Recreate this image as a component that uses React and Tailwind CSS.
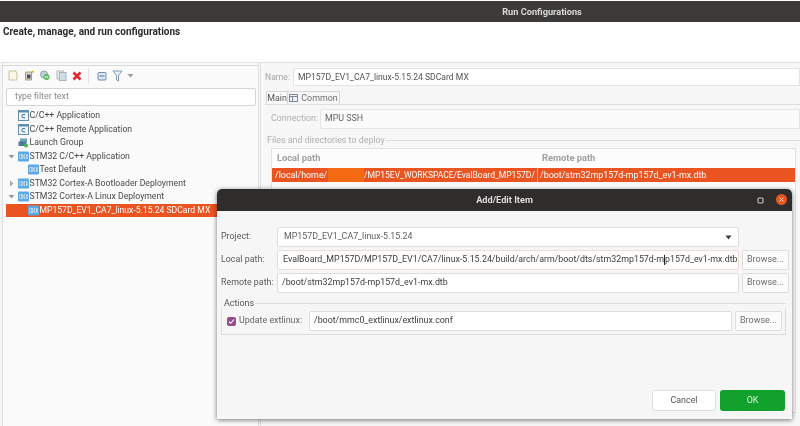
const font = { fontFamily: 'Roboto, "Noto Sans", sans-serif' };

function IdeIcon() {
  return (
    <svg width="11" height="11" viewBox="0 0 11 11" className="shrink-0">
      <rect x="0" y="0.5" width="11" height="10" rx="1" fill="#58a9e6" />
      <rect x="1.5" y="3" width="8" height="5" fill="#d8ecfa" />
      <path d="M2.5 3.5v4M4 3.5v4M5 3.5h1v4H5M7.5 3.5v4h1M7.5 5.5h1M7.5 3.5h1" stroke="#3d8fd0" strokeWidth="0.7" fill="none" />
    </svg>
  );
}

function CIcon() {
  return (
    <svg width="11" height="11" viewBox="0 0 11 11" className="shrink-0">
      <rect x="0.5" y="0.5" width="10" height="10" fill="#eef4f8" stroke="#6d8ea8" />
      <rect x="0.5" y="0.5" width="10" height="2" fill="#5b8fb8" />
      <path d="M7 4.6H5a1 1 0 0 0-1 1v1.2a1 1 0 0 0 1 1h2" stroke="#3c6f96" strokeWidth="1" fill="none" />
    </svg>
  );
}

function GroupIcon() {
  return (
    <svg width="11" height="11" viewBox="0 0 11 11" className="shrink-0">
      <rect x="2" y="1.5" width="7" height="4" fill="#6f9fbb" />
      <rect x="0.5" y="4.5" width="8" height="4.5" fill="#4d7d9c" />
      <circle cx="8" cy="8.5" r="2" fill="#4bb04f" />
    </svg>
  );
}

function Chevron({ open }) {
  return (
    <svg width="7" height="7" viewBox="0 0 7 7" className="shrink-0">
      {open ? <path d="M0.5 2h6L3.5 5.5z" fill="#9a9a9a" /> : <path d="M2 0.5v6L5.5 3.5z" fill="#a8a8a8" />}
    </svg>
  );
}

function TreeRow({ icon, label, indent, chevron, selected }) {
  return (
    <div className={`flex h-[13.5px] items-center whitespace-nowrap leading-none ${selected ? "bg-[#e95420] text-[8.6px] text-white" : "text-[8.7px] text-[#4a4a4a]"}`}>
      <div className={`flex items-center ${indent}`}>
        {chevron !== undefined ? <span className="mr-[3px] flex w-[7px]"><Chevron open={chevron} /></span> : null}
        {icon}
        <span className="ml-[0.5px]">{label}</span>
      </div>
    </div>
  );
}

function Toolbar() {
  return (
    <div className="flex h-[21px] items-center gap-[5.5px] pb-[2px] pl-[5px]">
      <svg width="10" height="11" viewBox="0 0 10 11"><path d="M1 1h6l2 2v7H1z" fill="#fbf7e6" stroke="#c9c2a0" /><path d="M7.5 0.5l1 1" stroke="#e0b020" /></svg>
      <svg width="11" height="11" viewBox="0 0 11 11"><path d="M1.5 2h6v8h-6z" fill="#d9d6c8" stroke="#a5a08a" /><rect x="3" y="4.5" width="3.5" height="4" fill="#4a4f5c" /><path d="M8 1l1.5 1.5" stroke="#d9a520" strokeWidth="1.5" /></svg>
      <svg width="12" height="11" viewBox="0 0 12 11" className="ml-[-1px]"><circle cx="5" cy="4.5" r="3.5" fill="#c4d0d8" stroke="#8da0ad" /><circle cx="7.5" cy="7" r="3" fill="#5dbb63" /><rect x="5.8" y="6.5" width="3.4" height="1" fill="#fff" /></svg>
      <svg width="11" height="11" viewBox="0 0 11 11" className="ml-[-1px]"><rect x="1" y="1" width="6.5" height="8" fill="#e6ebf0" stroke="#b3bcc6" /><rect x="3.5" y="2.5" width="6.5" height="8" fill="#d0dbe6" stroke="#a7b4c2" /></svg>
      <svg width="10" height="10" viewBox="0 0 10 10"><path d="M1.5 1.5l7 7M8.5 1.5l-7 7" stroke="#df2a2f" strokeWidth="2.6" /></svg>
      <span className="ml-[0.5px] h-[15px] w-px bg-[#e3e3e3]" />
      <svg width="10" height="10" viewBox="0 0 10 10" className="ml-[2px]"><rect x="1" y="1.5" width="8" height="7.5" rx="1" fill="#dce6f0" stroke="#6e8fb0" /><path d="M2.5 5h5" stroke="#4f7396" /></svg>
      <svg width="11" height="12" viewBox="0 0 11 12"><path d="M1 1h9L6.5 5.5V11l-2-1V5.5z" fill="#eef4f9" stroke="#7f9cb6" /></svg>
      <svg width="7" height="5" viewBox="0 0 7 5" className="ml-[-2px]"><path d="M0.5 1h6L3.5 4.5z" fill="#9d9d9d" /></svg>
    </div>
  );
}

function LeftPanel() {
  return (
    <div className="w-[257px] shrink-0 self-stretch border-x border-t border-[#e0e0e0] bg-[#fafafa]">
      <div className="mt-[2px] border-t border-[#d9d9d9]"><Toolbar /></div>
      <div className="ml-[3px] mr-[2px] mt-[1px] flex h-[18px] items-center rounded-[2px] border border-[#d5d5d5] bg-white pl-[8px] text-[8.9px] text-[#8a8a8a]">type filter text</div>
      <div className="ml-[3px] mt-[3px]">
        <TreeRow indent="pl-[12px]" icon={<CIcon />} label="C/C++ Application" />
        <TreeRow indent="pl-[12px]" icon={<CIcon />} label="C/C++ Remote Application" />
        <TreeRow indent="pl-[12px]" icon={<GroupIcon />} label="Launch Group" />
        <TreeRow indent="pl-[2px]" chevron={true} icon={<IdeIcon />} label="STM32 C/C++ Application" />
        <TreeRow indent="pl-[22px]" icon={<IdeIcon />} label="Test Default" />
        <TreeRow indent="pl-[2px]" chevron={false} icon={<IdeIcon />} label="STM32 Cortex-A Bootloader Deployment" />
        <TreeRow indent="pl-[2px]" chevron={true} icon={<IdeIcon />} label="STM32 Cortex-A Linux Deployment" />
        <TreeRow indent="pl-[22px]" selected icon={<IdeIcon />} label="MP157D_EV1_CA7_linux-5.15.24 SDCard MX" />
      </div>
    </div>
  );
}

function RightPanel() {
  return (
    <div className="min-w-0 flex-1 self-stretch border-l border-t border-[#e0e0e0] bg-[#f7f7f7] pl-[4px]">
      <div className="mt-[5px] flex h-[18px] items-center text-[8.6px]">
        <span className="w-[28px] text-[#a5a5a5]">Name:</span>
        <div className="flex h-full flex-1 items-center rounded-l-[2px] border border-[#e2e2e2] bg-white pl-[4px] text-[#555]">MP157D_EV1_CA7_linux-5.15.24 SDCard MX</div>
      </div>
      <div className="mt-[5px] flex h-[13px] items-center pl-[1px] text-[8.9px] leading-none text-[#555]">
        <div className="flex h-full w-[22px] items-center justify-center border-x border-t border-[#d6d6d6] bg-[#fbfbfb]">Main</div>
        <div className="flex h-full w-[52px] items-center justify-center gap-[3px] border-r border-t border-[#d6d6d6] text-[#707070]">
          <svg width="9" height="8" viewBox="0 0 9 8"><rect x="0.5" y="0.5" width="8" height="7" fill="#eef2f6" stroke="#7b8a9a" /><path d="M0.5 2.5h8M3.5 2.5v5" stroke="#7b8a9a" /></svg>
          Common
        </div>
      </div>
      <div className="border-t border-[#dedede] pl-[5px] pt-[4px]">
        <div className="flex h-[20px] items-center text-[8.9px]">
          <span className="w-[50px] pl-[1px] text-[#b0b0b0]">Connection:</span>
          <div className="flex h-full flex-1 items-center rounded-l-[2px] border border-[#e4e4e4] bg-[#fbfbfb] pl-[4px] text-[#666]">MPU SSH</div>
        </div>
        <div className="ml-[-3px] mt-[5px] flex items-center gap-[1px] text-[8.9px] leading-[12px] text-[#b0b0b0]">
          <span className="whitespace-nowrap">Files and directories to deploy</span>
          <span className="h-px flex-1 bg-[#e0e0e0]" />
        </div>
        <div className="ml-[1px] mr-[4px] mt-[2px] border border-[#e2e2e2] bg-[#fcfcfc]">
          <div className="flex h-[19px] items-center pb-[2px] text-[9.3px] font-bold text-[#a0a0a0]">
            <span className="w-[265px] pl-[5px]">Local path</span>
            <span className="pl-[5px]">Remote path</span>
          </div>
          <div className="flex h-[14px] items-center whitespace-nowrap bg-[#e95420] text-[8.9px] leading-none text-white">
            <div className="flex w-[265px] items-center overflow-hidden pl-[3px]">
              <span className="w-[53px] shrink-0">/local/home/</span>
              <span className="h-[14px] w-[36px] shrink-0 bg-[#f46a12]" />
              <span className="text-[8.5px]">/MP15EV_WORKSPACE/EvalBoard_MP157D/</span>
            </div>
            <span className="flex h-full items-center border-l border-[#f3a283] pl-[2px]">/boot/stm32mp157d-mp157d_ev1-mx.dtb</span>
          </div>
          <div className="h-[230px]" />
        </div>
      </div>
    </div>
  );
}

function Field({ children, className }) {
  return <div className={`flex h-[20px] min-w-0 items-center overflow-hidden whitespace-nowrap rounded-[2px] border border-[#dddddd] bg-white text-[8.85px] text-[#3c3c3c] ${className}`}>{children}</div>;
}

function Browse() {
  return <div className="flex h-[20px] w-[47px] shrink-0 items-center justify-center rounded-[2px] border border-[#dddddd] bg-[#fbfbfb] text-[9px] text-[#6e6e6e]">Browse...</div>;
}

function Label({ children }) {
  return <span className="w-[56px] shrink-0 whitespace-nowrap text-[8.9px] text-[#5a5a5a]">{children}</span>;
}

function Dialog() {
  return (
    <div className="absolute left-[217px] top-[189px] flex h-[230px] w-[575px] flex-col overflow-hidden rounded-t-[5px] bg-[#f6f6f6] shadow-[0_1px_5px_rgba(0,0,0,0.55)]" style={font}>
      <div className="relative flex h-[22px] shrink-0 items-center justify-center bg-[#2f2d2c] text-[9.2px] font-bold text-[#dcdcdc]">
        Add/Edit Item
        <svg width="7" height="7" viewBox="0 0 7 7" className="absolute right-[28px] top-[8px]"><rect x="1" y="1" width="5" height="5" rx="1" fill="none" stroke="#c4c4c4" strokeWidth="1.1" /></svg>
        <span className="absolute right-[5px] top-[5px] flex h-[11px] w-[11px] items-center justify-center rounded-full bg-[#e95420]">
          <svg width="5" height="5" viewBox="0 0 5 5"><path d="M0.7 0.7l3.6 3.6M4.3 0.7l-3.6 3.6" stroke="#fff" strokeWidth="0.9" /></svg>
        </span>
      </div>
      <div className="flex flex-1 flex-col pl-[4px] pr-[3px] pt-[16px]">
        <div className="flex items-center">
          <Label>Project:</Label>
          <Field className="w-[462px] justify-between bg-[#f8f8f8] pl-[6px] pr-[6px] text-[#5e5e5e]">
            <span>MP157D_EV1_CA7_linux-5.15.24</span>
            <svg width="7" height="5" viewBox="0 0 7 5"><path d="M0.5 0.5h6L3.5 4.5z" fill="#3c3c3c" /></svg>
          </Field>
        </div>
        <div className="mt-[3px] flex items-center">
          <Label>Local path:</Label>
          <Field className="w-[462px] border-[#ecdcd6] pl-[5px]">
            <span className="flex items-center">
              EvalBoard_MP157D/MP157D_EV1/CA7/linux-5.15.24/build/arch/arm/boot/dts/stm32mp157d-m
              <span className="h-[10px] w-0 border-l border-[#222]" />
              p157d_ev1-mx.dtb
            </span>
          </Field>
          <div className="ml-[3px]"><Browse /></div>
        </div>
        <div className="mt-[3px] flex items-center">
          <Label>Remote path:</Label>
          <Field className="w-[462px] pl-[4px]">/boot/stm32mp157d-mp157d_ev1-mx.dtb</Field>
          <div className="ml-[3px]"><Browse /></div>
        </div>
        <div className="mr-[3px] mt-[6px]">
          <div className="flex h-[9px] items-center gap-[1px] text-[8.9px] text-[#555]">
            <span className="pl-[3px]">Actions</span>
            <span className="h-px flex-1 bg-[#dcdcdc]" />
          </div>
          <div className="flex h-[27px] items-center border-x border-b border-[#dcdcdc] pl-[5px] pr-[3px]">
            <span className="flex h-[9px] w-[9px] shrink-0 items-center justify-center rounded-[2px] bg-[#924d8b]">
              <svg width="7" height="7" viewBox="0 0 7 7"><path d="M1 3.5l1.7 1.8L6 1.5" fill="none" stroke="#fff" strokeWidth="1.1" /></svg>
            </span>
            <span className="ml-[3px] w-[70px] shrink-0 whitespace-nowrap text-[8.9px] text-[#666]">Update extlinux:</span>
            <Field className="w-[424px] pl-[4px]">/boot/mmc0_extlinux/extlinux.conf</Field>
            <div className="ml-[3px]"><Browse /></div>
          </div>
        </div>
        <div className="mb-[8px] mr-[4px] mt-auto flex justify-end gap-[4px]">
          <div className="flex h-[21px] w-[64px] items-center justify-center rounded-[3px] border border-[#dddddd] bg-white text-[8.9px] text-[#555]">Cancel</div>
          <div className="flex h-[21px] w-[65px] items-center justify-center rounded-[3px] bg-[#12a12c] text-[8.9px] text-[#d7f2d7]">OK</div>
        </div>
      </div>
    </div>
  );
}

export default function App() {
  return (
    <div className="relative flex h-[426px] w-[800px] flex-col overflow-hidden bg-white blur-[0.35px]" style={font}>
      <div className="mt-[1px] flex h-[21px] shrink-0 items-center justify-center bg-[#3d3b39] pl-[284px] text-[9.2px] font-bold text-[#d8d8d8]">Run Configurations</div>
      <div className="h-[40px] shrink-0 pl-[3px] pt-[4px] text-[10px] font-bold leading-[12px] text-[#2b2b2b]">Create, manage, and run configurations</div>
      <div className="flex min-h-0 flex-1 gap-[1px] bg-[#f4f4f4] pl-[2px]">
        <LeftPanel />
        <RightPanel />
      </div>
      <Dialog />
    </div>
  );
}
